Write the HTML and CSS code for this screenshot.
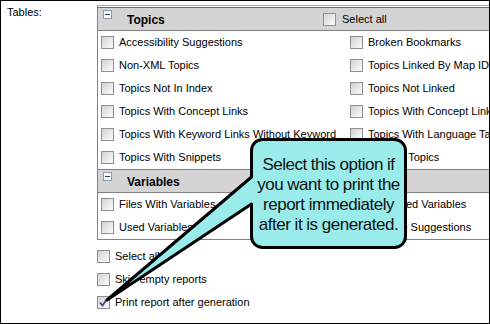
FILE: index.html
```html
<!DOCTYPE html>
<html lang="en">
<head>
    <meta charset="UTF-8">
    <meta name="viewport" content="width=device-width, initial-scale=1.0">
    <title>Report Tables</title>
    <link rel="stylesheet" href="styles.css">
</head>
<body>
    <div class="frame">
        <div class="label">Tables:</div>

        <div class="content">
            <div class="panel">
                <div class="group-head">
                    <span class="toggle"></span>
                    <span class="group-title">Topics</span>
                    <span class="head-select"><span class="box"></span>Select all</span>
                </div>
                <div class="grid">
                    <div class="item"><span class="box"></span>Accessibility Suggestions</div>
                    <div class="item"><span class="box"></span>Broken Bookmarks</div>
                    <div class="item"><span class="box"></span>Non-XML Topics</div>
                    <div class="item"><span class="box"></span>Topics Linked By Map ID</div>
                    <div class="item"><span class="box"></span>Topics Not In Index</div>
                    <div class="item"><span class="box"></span>Topics Not Linked</div>
                    <div class="item"><span class="box"></span>Topics With Concept Links</div>
                    <div class="item"><span class="box"></span>Topics With Concept Links</div>
                    <div class="item"><span class="box"></span>Topics With Keyword Links Without Keyword</div>
                    <div class="item"><span class="box"></span>Topics With Language Tags</div>
                    <div class="item"><span class="box"></span>Topics With Snippets</div>
                    <div class="item"><span class="box"></span>Untitled Topics</div>
                </div>

                <div class="group-head vars">
                    <span class="toggle"></span>
                    <span class="group-title">Variables</span>
                </div>
                <div class="grid">
                    <div class="item"><span class="box"></span>Files With Variables</div>
                    <div class="item"><span class="box"></span>Undefined Variables</div>
                    <div class="item"><span class="box"></span>Used Variables</div>
                    <div class="item"><span class="box"></span>Variable Suggestions</div>
                </div>
            </div>

            <div class="options">
                <div class="opt"><span class="box"></span>Select all</div>
                <div class="opt"><span class="box"></span>Skip empty reports</div>
                <div class="opt">
                    <span class="box checked">
                        <svg viewBox="0 0 13 13" width="13" height="13"><polyline points="3,6.5 5.5,9.5 10,3" fill="none" stroke="#3b4a9c" stroke-width="1.8"/></svg>
                    </span>Print report after generation
                </div>
            </div>
        </div>

        <!-- callout bubble pointing at the print option -->
        <svg class="callout-shape" width="490" height="324" viewBox="0 0 490 324">
            <path d="M 262.5,139.5 H 394.5 A 11 11 0 0 1 405.5,150.5 V 236.5 A 11 11 0 0 1 394.5,247.5 H 262.5 A 11 11 0 0 1 251.5,236.5 V 204 L 107,300 L 251.5,177 V 150.5 A 11 11 0 0 1 262.5,139.5 Z"
                  fill="#99ecea" stroke="#000" stroke-width="3" stroke-linejoin="round"/>
        </svg>
        <div class="callout-text">
            Select this option if<br>
            you want to print the<br>
            report immediately<br>
            after it is generated.
        </div>
    </div>
</body>
</html>
```

FILE: styles.css
```css
body {
    margin: 0;
    background: #fff;
}

.frame {
    position: relative;
    display: flex;
    width: 490px;
    height: 324px;
    box-sizing: border-box;
    border: 1px solid #000;
    overflow: hidden;
    font-family: "Liberation Sans", Arial, sans-serif;
    font-size: 11px;
    line-height: 13px;
    color: #000;
}

.label {
    width: 90px;
    flex-shrink: 0;
    padding: 5px 0 0 6px;
}

.content {
    flex: 1;
    min-width: 0;
    padding-top: 4px;
}

/* the grouped list of report tables */
.panel {
    width: 460px;
    border-top: 1px solid #a5a5a5;
    border-left: 1px solid #828282;
    border-bottom: 1px solid #828282;
    padding-top: 1px;
}

.group-head {
    display: flex;
    align-items: center;
    height: 22px;
    background-color: #d4d4d4;
    border-top: 1px solid #6d6d6d;
    border-bottom: 1px solid #808080;
}

.group-head.vars {
    border-top-color: #808080;
}

.toggle {
    align-self: flex-start;
    position: relative;
    width: 7px;
    height: 7px;
    margin: 2px 0 0 5px;
    border: 1px solid #8d9aae;
    background: #fbfbfb;
}

.toggle::after {
    content: "";
    position: absolute;
    left: 1px;
    top: 3px;
    width: 5px;
    height: 1px;
    background: #1e3a6e;
}

.group-title {
    width: 196px;
    padding: 3px 0 0 15px;
    font-size: 12px;
    font-weight: bold;
}

.head-select {
    display: flex;
    align-items: center;
    gap: 6px;
    padding-top: 1px;
}

.grid {
    display: grid;
    grid-template-columns: 249px 200px;
}

.item {
    display: flex;
    align-items: center;
    gap: 5px;
    height: 23px;
    padding-left: 3px;
    white-space: nowrap;
}

.box {
    flex-shrink: 0;
    width: 11px;
    height: 11px;
    border: 1px solid #8f8f8f;
    background: linear-gradient(135deg, #d2d2d2, #f0f0f0 70%, #fafafa);
}

.box.checked svg {
    display: block;
    margin: -1px;
}

.options {
    margin-top: 5px;
}

.opt {
    display: flex;
    align-items: center;
    gap: 5px;
    height: 23px;
    white-space: nowrap;
}

.callout-shape {
    position: absolute;
    left: -1px;
    top: -1px;
    pointer-events: none;
}

.callout-text {
    position: absolute;
    left: 249px;
    top: 137px;
    width: 157px;
    height: 111px;
    box-sizing: border-box;
    padding-top: 2px;
    display: flex;
    align-items: center;
    justify-content: center;
    text-align: center;
    font-size: 17px;
    line-height: 20px;
    letter-spacing: -0.5px;
    color: #111;
}
```
